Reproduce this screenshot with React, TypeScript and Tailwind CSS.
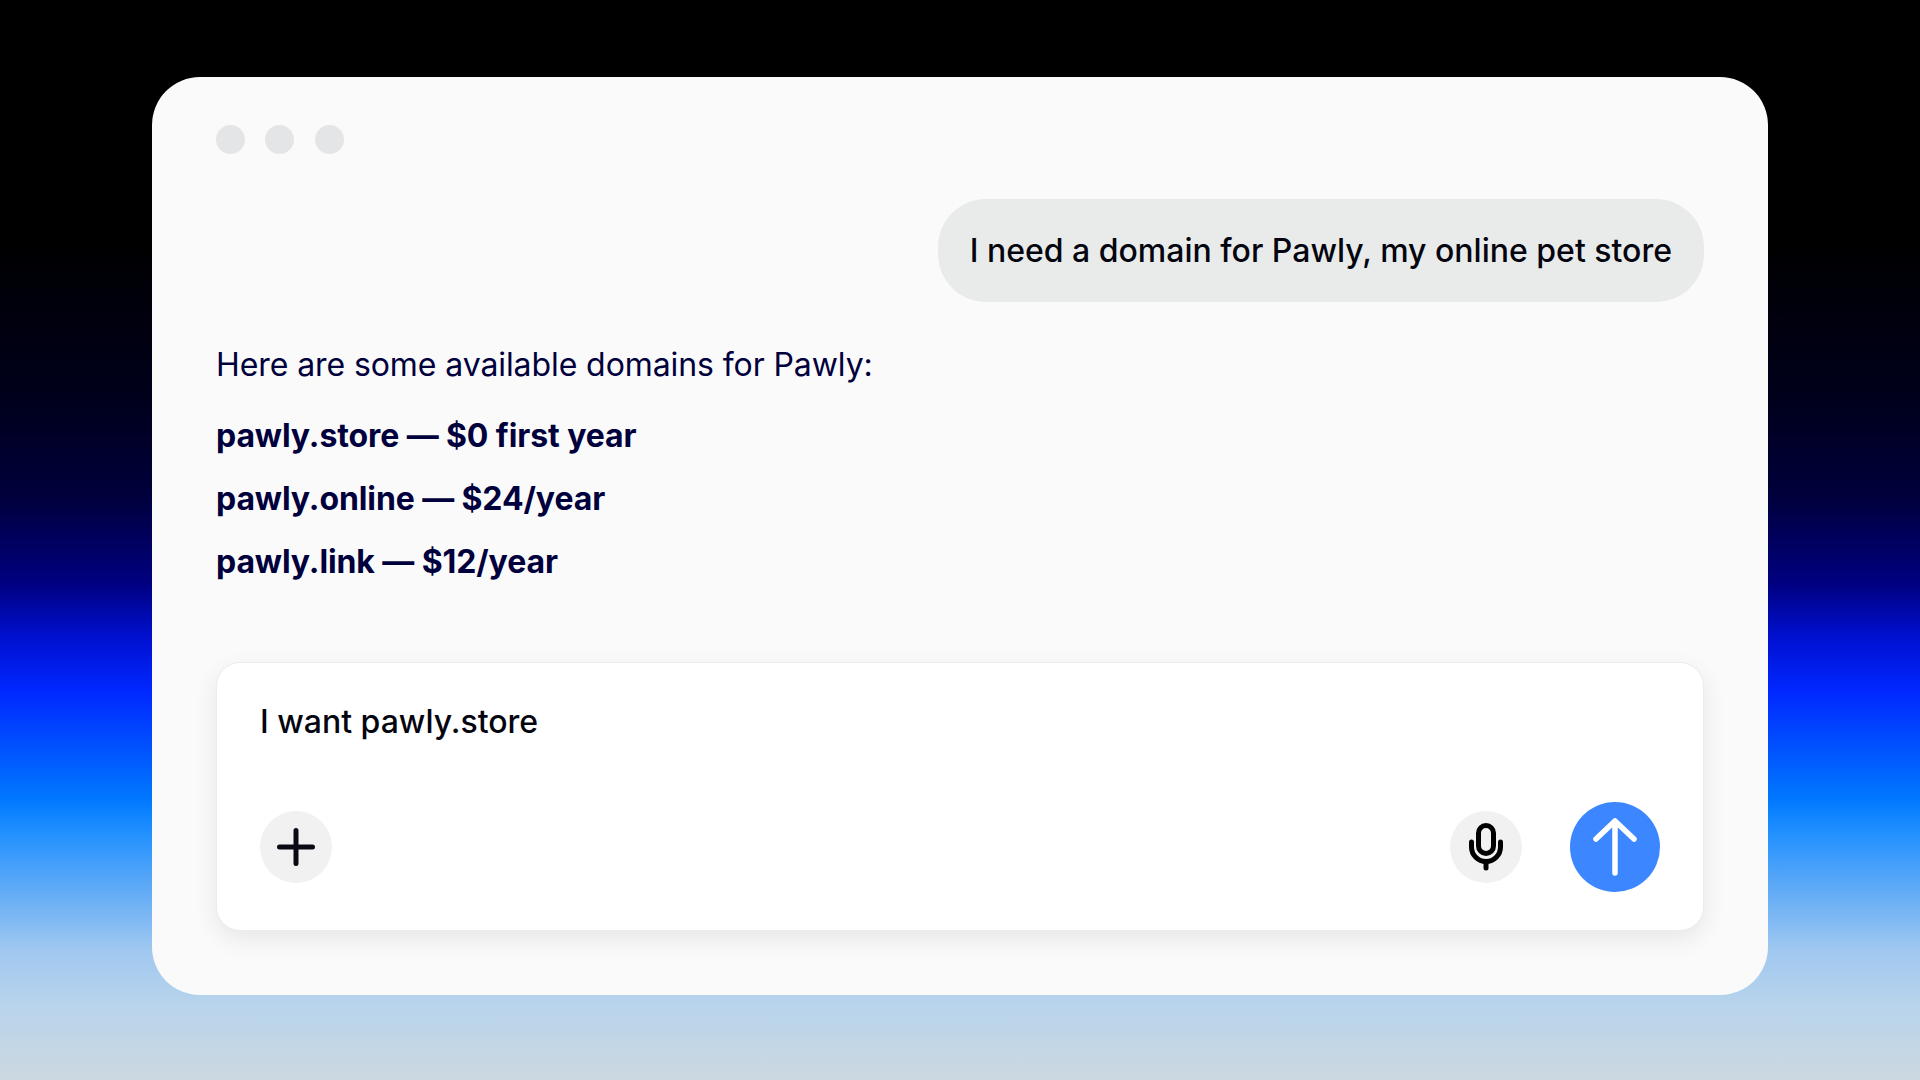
const domains = ['pawly.store — $0 first year', 'pawly.online — $24/year', 'pawly.link — $12/year'];

function MicIcon() {
    return (
        <svg width="36" height="48" viewBox="0 0 36 48" fill="none" stroke="#000" strokeWidth="5" strokeLinecap="round">
            <rect x="10.5" y="2.5" width="15" height="28" rx="7.5" />
            <path d="M3.5 19v5c0 8 6.5 14.500 14.500 14.500S32.500 32 32.500 24v-5" />
            <path d="M18 38.500V45" />
        </svg>
    );
}

function PlusIcon() {
    return (
        <svg width="40" height="40" viewBox="0 0 40 40" fill="none" stroke="#0a0a14" strokeWidth="5" strokeLinecap="round">
            <path d="M20 3.500v33M3.500 20h33" />
        </svg>
    );
}

function ArrowIcon() {
    return (
        <svg width="48" height="60" viewBox="0 0 48 60" fill="none" stroke="#fff" strokeWidth="5.500" strokeLinecap="round" strokeLinejoin="round">
            <path d="M24 56V4M5 22L24 4l19 18" />
        </svg>
    );
}

export default function App() {
    return (
        <div className="h-[1080px] w-[1920px] overflow-hidden pt-[77px] pl-[152px] font-['Inter',sans-serif] bg-[linear-gradient(180deg,#000000_0%,#000000_22%,#00001c_37%,#00003c_46%,#000080_54%,#0010d0_59%,#0028ff_64%,#0050ff_69%,#0078ff_74%,#2090ff_77%,#50a4f8_81%,#a0c8f0_88%,#b8d4ec_93%,#ccd8e0_100%)]">
            <div className="h-[918px] w-[1616px] rounded-[48px] bg-[#fafafa] px-16 pt-12">
                {/* Window dots */}
                <div className="flex gap-[20.3px]">
                    <div className="h-[29px] w-[29px] rounded-full bg-[#e4e5e7]" />
                    <div className="h-[29px] w-[29px] rounded-full bg-[#e4e5e7]" />
                    <div className="h-[29px] w-[29px] rounded-full bg-[#e4e5e7]" />
                </div>

                {/* User message */}
                <div className="mt-[45px] flex justify-end">
                    <div className="flex h-[103px] items-center rounded-[48px] bg-[#e9ebea] px-8 text-[32px] font-medium text-[#05050f]">
                        I need a domain for Pawly, my online pet store
                    </div>
                </div>

                {/* Answer */}
                <p className="mt-[39px] text-[32px] leading-[48px] tracking-[-0.09px] text-[#00003c]">Here are some available domains for Pawly:</p>
                <ul className="mt-[23px] text-[32px] leading-[48px] font-bold text-[#00003c]">
                    {domains.map((domain) => (
                        <li key={domain} className="mb-[15px] tracking-[-0.1px]">
                            {domain}
                        </li>
                    ))}
                </ul>

                {/* Input */}
                <div className="mt-[76px] h-[269px] rounded-3xl border border-[#ececec] bg-white px-[43px] pt-[35px] shadow-[0_8px_24px_rgba(0,0,0,0.08)]">
                    <p className="text-[32px] leading-[48px] font-medium text-[#05050f]">I want pawly.store</p>
                    <div className="mt-[56px] flex items-center">
                        <button className="flex h-[72px] w-[72px] items-center justify-center rounded-full bg-[#f1f1f1]">
                            <PlusIcon />
                        </button>
                        <button className="ml-auto flex h-[72px] w-[72px] items-center justify-center rounded-full bg-[#f1f1f1]">
                            <MicIcon />
                        </button>
                        <button className="ml-[48px] flex h-[90px] w-[90px] items-center justify-center rounded-full bg-[#3c87ff]">
                            <ArrowIcon />
                        </button>
                    </div>
                </div>
            </div>
        </div>
    );
}
